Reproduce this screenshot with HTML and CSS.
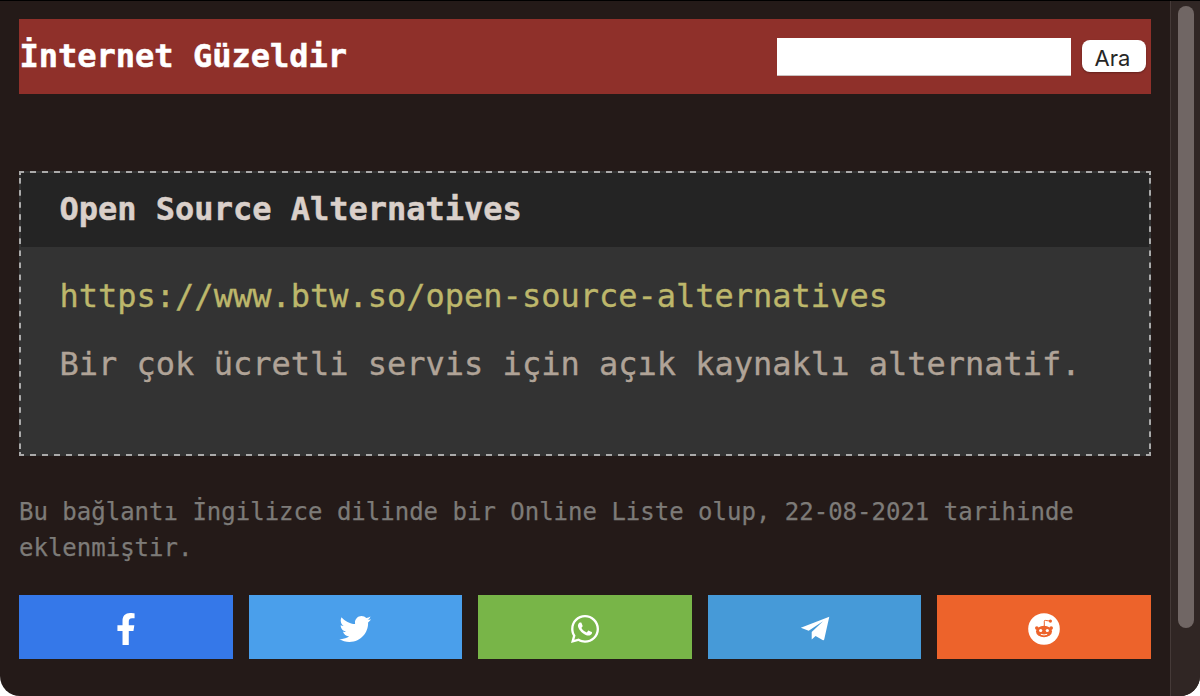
FILE: index.html
```html
<!DOCTYPE html>
<html lang="tr">
<head>
<meta charset="utf-8">
<title>İnternet Güzeldir</title>
<link rel="stylesheet" href="styles.css">
</head>
<body>
<div class="window">
  <main class="page">
    <header class="header">
      <h1 class="site-title">İnternet Güzeldir</h1>
      <form class="search">
        <input class="search-input" type="text" aria-label="Ara">
        <button class="search-button" type="button">Ara</button>
      </form>
    </header>
    <article class="card">
      <h2 class="card-title">Open Source Alternatives</h2>
      <div class="card-body">
        <a class="card-link">https://www.btw.so/open-source-alternatives</a>
        <p class="card-text">Bir çok ücretli servis için açık kaynaklı alternatif.</p>
      </div>
    </article>
    <p class="meta">Bu bağlantı İngilizce dilinde bir Online Liste olup, 22-08-2021 tarihinde eklenmiştir.</p>
    <nav class="share">
      <a class="share-item facebook"><svg class="icon" viewBox="-96 0 512 512"><path d="M279.14 288l14.22-92.66h-88.91v-60.13c0-25.35 12.42-50.06 52.24-50.06h40.42V6.26S260.43 0 225.36 0c-73.22 0-121.08 44.38-121.08 124.72v70.62H22.89V288h81.39v224h100.17V288z"/></svg></a>
      <a class="share-item twitter"><svg class="icon" viewBox="-6 0 512 512"><path d="M459.37 151.716c.325 4.548.325 9.097.325 13.645 0 138.72-105.583 298.558-298.558 298.558-59.452 0-114.68-17.219-161.137-47.106 8.447.974 16.568 1.299 25.34 1.299 49.055 0 94.213-16.568 130.274-44.832-46.132-.975-84.792-31.188-98.112-72.772 6.498.974 12.995 1.624 19.818 1.624 9.421 0 18.843-1.3 27.614-3.573-48.081-9.747-84.143-51.98-84.143-102.985v-1.299c13.969 7.797 30.214 12.67 47.431 13.319-28.264-18.843-46.781-51.005-46.781-87.391 0-19.492 5.197-37.36 14.294-52.954 51.655 63.675 129.3 105.258 216.365 109.807-1.624-7.797-2.599-15.918-2.599-24.04 0-57.828 46.782-104.934 104.934-104.934 30.213 0 57.502 12.67 76.67 33.137 23.715-4.548 46.456-13.32 66.599-25.34-7.798 24.366-24.366 44.833-46.132 57.827 21.117-2.273 41.584-8.122 60.426-16.243-14.292 20.791-32.161 39.308-52.628 54.253z"/></svg></a>
      <a class="share-item whatsapp"><svg class="icon" viewBox="-32 0 512 512"><path d="M380.9 97.1C339 55.1 283.2 32 223.9 32c-122.4 0-222 99.6-222 222 0 39.1 10.2 77.3 29.6 111L0 480l117.7-30.9c32.4 17.7 68.9 27 106.1 27h.1c122.3 0 224.1-99.6 224.1-222 0-59.3-25.2-115-67.1-157zm-157 341.6c-33.2 0-65.7-8.9-94-25.7l-6.7-4-69.8 18.3L72 359.2l-4.4-7c-18.5-29.4-28.2-63.3-28.2-98.2 0-101.7 82.8-184.5 184.6-184.5 49.3 0 95.6 19.2 130.4 54.1 34.8 34.9 56.2 81.2 56.1 130.5 0 101.8-84.9 184.6-186.6 184.6zm101.2-138.2c-5.5-2.8-32.8-16.2-37.9-18-5.1-1.9-8.8-2.8-12.5 2.8-3.7 5.6-14.3 18-17.6 21.8-3.2 3.7-6.5 4.2-12 1.4-32.6-16.3-54-29.1-75.5-66-5.7-9.8 5.7-9.1 16.3-30.3 1.8-3.7.9-6.9-.5-9.7-1.4-2.8-12.5-30.1-17.1-41.2-4.5-10.8-9.1-9.3-12.5-9.5-3.2-.2-6.9-.2-10.6-.2-3.7 0-9.7 1.4-14.8 6.9-5.1 5.6-19.4 19-19.4 46.3 0 27.3 19.9 53.7 22.6 57.4 2.8 3.7 39.1 59.7 94.8 83.8 35.2 15.2 49 16.5 66.6 13.9 10.7-1.6 32.8-13.4 37.4-26.4 4.6-13 4.6-24.1 3.2-26.4-1.3-2.5-5-3.9-10.5-6.6z"/></svg></a>
      <a class="share-item telegram"><svg class="icon" viewBox="0 0 32 32"><path d="M30.3 3.8L1.8 14.7l7.9 3L24 8.2 12.7 18.9v7.7l3.9-3.6 7.4 4.3q.9.3 1.2-.7z"/></svg></a>
      <a class="share-item reddit"><svg class="icon" viewBox="0 0 32 32"><circle cx="16" cy="16" r="15.8"/><g class="mark"><ellipse cx="16" cy="18.5" rx="8" ry="5.7"/><circle cx="8.8" cy="15.1" r="1.8"/><circle cx="23.2" cy="15.1" r="1.8"/><circle cx="22.4" cy="8.1" r="1.6"/></g><path class="antenna" d="M16.3 13V8.2q0-1 1-.8l5 .7"/><circle cx="12.7" cy="17.5" r="1.6"/><circle cx="19.3" cy="17.5" r="1.6"/><path class="smile" d="M12.8 21.3q3.2 1.3 6.4 0"/></svg></a>
    </nav>
  </main>
  <div class="scroll-track"><div class="scroll-thumb"></div></div>
</div>
</body>
</html>
```
FILE: styles.css
```css
* { box-sizing: border-box; }
body { margin: 0; background: #fff; font-family: "DejaVu Sans Mono", monospace; }
.window { display: flex; height: 696px; overflow: hidden; background: #241a18; border-top: 1px solid #000; border-radius: 0 0 20px 20px; }
.page { width: 1170px; padding: 18px 19px 0; }
.header { display: flex; justify-content: space-between; height: 75px; padding: 18px 5px 0 0; background: #8f302a; }
.site-title { margin: 0; padding-left: .5px; color: #fff; font-size: 32px; line-height: 38px; -webkit-text-stroke: .5px; }
.search { display: flex; gap: 11px; padding-top: 1px; }
.search-input { width: 294px; height: 38px; padding: 0 6px; border: 0; border-bottom: 1px solid #c9c0bf; background: #fff; }
.search-button { width: 64px; height: 32px; margin-top: 2px; padding: 4px 3px 0 0; border: 0; border-radius: 8px; background: #fff; box-shadow: 0 1px 2px rgba(0,0,0,.3); color: #262626; font: 22px/28px Inter, sans-serif; }
/* Evenly spaced 6px dashes, with short dashes meeting at the corners */
.card {
  height: 285px; margin-top: 77px; border: 2px solid transparent;
  background:
    linear-gradient(#aaa, #aaa) 0 0 / 2px 4px no-repeat border-box,
    linear-gradient(#aaa, #aaa) 100% 0 / 2px 4px no-repeat border-box,
    linear-gradient(#aaa, #aaa) 0 100% / 2px 4px no-repeat border-box,
    linear-gradient(#aaa, #aaa) 100% 100% / 2px 4px no-repeat border-box,
    linear-gradient(90deg, #aaa 6px, #333 6px) -1px 0 / 12px 2px repeat-x border-box,
    linear-gradient(90deg, #aaa 6px, #333 6px) -1px 100% / 12px 2px repeat-x border-box,
    linear-gradient(#aaa 6px, #333 6px) 0 -5px / 2px 12.07px repeat-y border-box,
    linear-gradient(#aaa 6px, #333 6px) 100% -5px / 2px 12.07px repeat-y border-box,
    #333;
}
.card-title { height: 74px; margin: 0; padding-left: 38.5px; background: #242424; color: #dad0ca; font-size: 32px; line-height: 72px; -webkit-text-stroke: .5px; }
.card-body { display: flex; flex-direction: column; gap: 20px; padding: 25px 38.5px 0; font-size: 32px; line-height: 48px; -webkit-text-stroke: .35px; }
.card-link { color: #bdb76b; }
.card-text { margin: 0; color: #b0a397; }
.meta { margin: 38px 0 0; color: #7d7b78; font-size: 24px; line-height: 36px; -webkit-text-stroke: .25px; }
.share { display: grid; grid-template-columns: repeat(5, 1fr); gap: 16px; margin-top: 29px; }
.share-item { display: flex; justify-content: center; height: 64px; padding-top: 18px; }
.icon { width: 32px; height: 32px; fill: #fff; }
.facebook { background: #3578e9; }
.twitter { background: #4a9feb; }
.whatsapp { background: #78b548; }
.telegram { background: #469ad8; }
.reddit { background: #ed632b; }
.mark { fill: #ed632b; }
.antenna { fill: none; stroke: #ed632b; stroke-width: 1; }
.smile { fill: none; stroke: #fff; stroke-width: 1; }
.scroll-track { width: 30px; padding: 5px 0 0 7px; border-left: 1px solid #453a38; background: #302624; }
.scroll-thumb { width: 16px; height: 622px; border-radius: 8px; background: #706664; }
```
